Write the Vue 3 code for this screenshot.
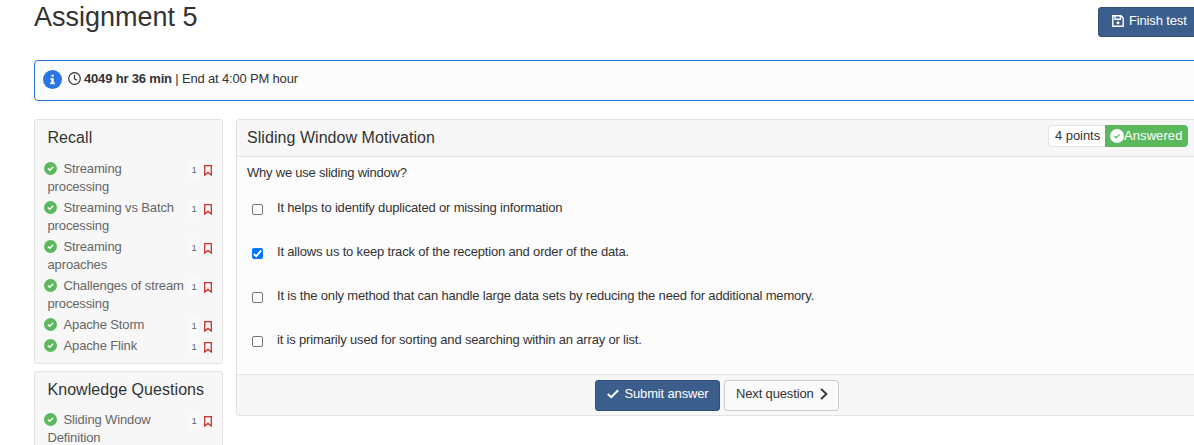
<script setup>
const groups = [
  {
    title: 'Recall',
    items: [
      ['Streaming', 'processing'],
      ['Streaming vs Batch', 'processing'],
      ['Streaming', 'aproaches'],
      ['Challenges of stream', 'processing'],
      ['Apache Storm'],
      ['Apache Flink'],
    ],
  },
  { title: 'Knowledge Questions', items: [['Sliding Window', 'Definition']] },
]
const answers = [
  { text: 'It helps to identify duplicated or missing information', checked: false },
  { text: 'It allows us to keep track of the reception and order of the data.', checked: true },
  { text: 'It is the only method that can handle large data sets by reducing the need for additional memory.', checked: false },
  { text: 'it is primarily used for sorting and searching within an array or list.', checked: false },
]
</script>

<template>
  <div class="page">
    <header class="top">
      <h1>Assignment 5</h1>
      <button class="btn primary finish">
        <svg width="12" height="12" viewBox="0 0 12 12" fill="none" stroke="#fff" stroke-width="1.4">
          <path d="M.8 .8H9L11.2 3V11.2H.8Z" /><path d="M3 1V4.2H8.4V1" /><circle cx="6" cy="7.7" r="1.5" fill="#fff" stroke="none" />
        </svg>
        <span>Finish test</span>
      </button>
    </header>

    <div class="notice">
      <svg class="info" width="19" height="19" viewBox="0 0 18 18">
        <circle cx="9" cy="9" r="9" fill="#2a75e0" />
        <path d="M8 4.5h2.2v2H8zM7 7.7h3.2v4.2h1v1.6H6.8v-1.6h1.1V9.2H7z" fill="#fff" />
      </svg>
      <svg class="clock" width="13" height="13" viewBox="0 0 13 13" fill="none" stroke="#333" stroke-width="1.2">
        <circle cx="6.5" cy="6.5" r="5.8" /><path d="M6.5 2.8V6.7L9 8.3" />
      </svg>
      <span class="time"><b>4049 hr 36 min</b> | End at 4:00 PM hour</span>
    </div>

    <div class="columns">
      <aside>
        <section v-for="g in groups" :key="g.title" class="card">
          <h2>{{ g.title }}</h2>
          <div v-for="(item, i) in g.items" :key="i" class="item">
            <svg class="done" width="13" height="13" viewBox="0 0 13 13">
              <circle cx="6.5" cy="6.5" r="6.5" fill="#5cb85c" />
              <path d="M3.9 6.5L5.8 8.3L9.2 4.8" fill="none" stroke="#fff" stroke-width="1.4" />
            </svg>
            <div class="name">
              <div v-for="(line, n) in item" :key="n" :class="{ first: n === 0 }">{{ line }}</div>
            </div>
            <span class="count">1</span>
            <svg class="mark" width="8" height="11" viewBox="0 0 8 11" fill="none" stroke="#c9302c" stroke-width="1.3">
              <path d="M.7 .7H7.3V10L4 7.4L.7 10Z" />
            </svg>
          </div>
        </section>
      </aside>

      <main class="question">
        <div class="head">
          <h2>Sliding Window Motivation</h2>
          <div class="badges">
            <span class="points">4 points</span>
            <span class="answered">
              <svg width="14" height="14" viewBox="0 0 13 13">
                <circle cx="6.5" cy="6.5" r="6.5" fill="#fff" />
                <path d="M4 6.6L5.8 8.2L9 5" fill="none" stroke="#5cb85c" stroke-width="1.2" />
              </svg><span class="answered-text">Answered</span>
            </span>
          </div>
        </div>
        <div class="body">
          <p>Why we use sliding window?</p>
          <label v-for="a in answers" :key="a.text" class="answer">
            <span class="box" :class="{ on: a.checked }">
              <svg v-if="a.checked" width="11" height="11" viewBox="0 0 11 11" fill="none" stroke="#fff" stroke-width="1.9">
                <path d="M1.8 5.9L4.2 8.3L9.2 2.3" />
              </svg>
            </span>
            <span class="answer-text">{{ a.text }}</span>
          </label>
        </div>
        <div class="foot">
          <button class="btn primary submit">
            <svg width="12" height="10" viewBox="0 0 12 10" fill="none" stroke="#fff" stroke-width="2"><path d="M.8 5L4.2 8.2L11.2 1.2" /></svg>
            <span>Submit answer</span>
          </button>
          <button class="btn next">
            <span>Next question</span>
            <svg width="8" height="12" viewBox="0 0 8 12" fill="none" stroke="#333" stroke-width="1.9"><path d="M1 .9L6.4 6L1 11.1" /></svg>
          </button>
        </div>
      </main>
    </div>
  </div>
</template>

<style>
body { background: #fff; overflow: hidden; }
</style>

<style scoped>
.page { width: 1194px; height: 445px; overflow: hidden; box-sizing: border-box; padding-left: 34px; font: 13px/18px "Liberation Sans", Arial, sans-serif; letter-spacing: -0.175px; color: #333; }
.page * { box-sizing: border-box; }
svg { display: block; flex: none; }
h1, h2, p { margin: 0; font-weight: 400; }
.top { height: 60px; display: flex; justify-content: space-between; align-items: flex-start; }
h1 { font-size: 27px; line-height: 34px; letter-spacing: 0; }
h2 { font-size: 16px; line-height: 20px; letter-spacing: 0.05px; white-space: nowrap; }
.btn { font: inherit; letter-spacing: -0.15px; display: flex; align-items: center; height: 31px; border: 1px solid #ccc; border-radius: 3px; color: #333; background: #fafafa; white-space: nowrap; padding: 0 10px 3px 11px; }
.btn.primary { background: #3b5e8c; border-color: #31517a; color: #fff; }
.finish { width: 110px; height: 30px; margin: 7px -14px 0 0; padding-left: 13px; gap: 5px; }
.notice { height: 41px; margin-right: -10px; border: 1px solid #2a75e0; border-radius: 4px; background: #fcfcfc; display: flex; align-items: flex-start; padding-left: 8px; }
.info { margin: 9px 0 0 -0.5px; }
.clock { margin: 11px 3px 0 6.5px; }
.time { margin-top: 9px; white-space: nowrap; }
.columns { display: flex; margin: 18px -10px 0 0; gap: 13px; align-items: flex-start; }
aside { width: 189px; flex: none; }
.card { border: 1px solid #e3e3e3; border-radius: 3px; background: #f7f7f7; padding: 8px 10px 8px 8.5px; margin-bottom: 7px; }
.card h2 { margin: 0 0 12px 4px; }
.card + .card h2 { margin-bottom: 11px; }
.item { display: flex; align-items: flex-start; margin-bottom: 3px; color: #666; }
.item:last-child { margin-bottom: 0; }
.done { margin-top: 1.5px; margin-right: -9px; }
.name { flex: 1; white-space: nowrap; letter-spacing: -0.13px; }
.first { padding-left: 16px; }
.count { width: 10px; height: 17px; margin: 1px 5px 0 0; background: #fafafa; text-align: center; font-size: 9.5px; }
.mark { margin-top: 5px; }
.question { flex: 1; height: 297px; border: 1px solid #e3e3e3; border-radius: 3px; background: #fcfcfc; }
.head { height: 37px; border-bottom: 1px solid #e3e3e3; background: #f7f7f7; display: flex; justify-content: space-between; padding: 8px 15px 0 10px; }
.badges { display: flex; height: 22px; margin-top: -3px; line-height: 20px; letter-spacing: 0; }
.points { width: 57px; border: 1px solid #e3e3e3; border-right: 0; border-radius: 4px 0 0 4px; background: #fff; padding-left: 6px; white-space: nowrap; letter-spacing: -0.05px; }
.answered { width: 83px; border-radius: 0 4px 4px 0; background: #5cb85c; color: #fff; display: flex; align-items: center; padding-left: 4.5px; gap: 0.5px; letter-spacing: 0.08px; }
.body { height: 217px; padding: 7px 10px; }
.body p { height: 34px; letter-spacing: -0.22px; }
.answer { height: 44px; display: flex; align-items: flex-start; white-space: nowrap; }
.box { width: 11px; height: 11px; margin: 6px 14px 0 5px; border: 1px solid #767676; border-radius: 2px; background: #fff; }
.box.on { background: #0075ff; border: 0; }
.answer-text { margin-top: 1px; }
.foot { height: 41px; border-top: 1px solid #e3e3e3; background: #f7f7f7; display: flex; gap: 4px; padding: 5px 0 0 358px; }
.submit { width: 125px; gap: 5.5px; }
.next { width: 115px; gap: 6px; }
</style>
